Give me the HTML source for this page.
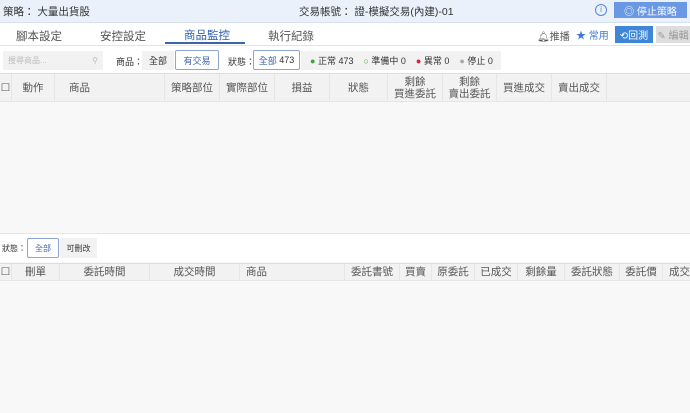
<!DOCTYPE html><html><head><meta charset="utf-8"><style>
*{box-sizing:border-box;margin:0;padding:0}
body{width:690px;height:413px;overflow:hidden;background:#f8f8f8;font-family:"Liberation Sans","Noto Sans CJK TC",sans-serif;font-size:10px;color:#333;position:relative}
.a{position:absolute;white-space:nowrap}
.top{left:0;top:0;width:690px;height:23px;background:#eaf1fb;border-bottom:1px solid #d6e0ef}
.tabs{left:0;top:23px;width:690px;height:23px;background:#fff;border-bottom:1px solid #e3e3e3}
.filter{left:0;top:46px;width:690px;height:27px;background:#fff}
.hdr{background:#f2f2f2;border-top:1px solid #ddd;border-bottom:1px solid #e6e6e6;color:#555;font-size:10.5px}
.c{position:absolute;top:0;height:100%;display:flex;align-items:center;justify-content:center;text-align:center;border-right:1px solid #e6e6e6;line-height:12px}
.btn{position:absolute;height:19px;display:flex;align-items:center;justify-content:center;font-size:9px}
</style></head><body>
<div class="a top"></div>
<div class="a" style="left:3px;top:4px;font-size:10.5px">策略： 大量出貨股</div>
<div class="a" style="left:299px;top:4px;font-size:10.5px">交易帳號： 證-模擬交易(內建)-01</div>
<div class="a" style="left:595px;top:4px;width:12px;height:12px;border:1px solid #5a86d6;border-radius:50%;color:#5a86d6;font-size:8px;text-align:center;line-height:10px">i</div>
<div class="a" style="left:614px;top:2px;width:73px;height:16px;background:#6a98e4;color:#fff;font-size:10px;display:flex;align-items:center;justify-content:center">◎ 停止策略</div>
<div class="a tabs"></div>
<div class="a" style="left:16px;top:28px;font-size:11.5px;color:#555">腳本設定</div>
<div class="a" style="left:100px;top:28px;font-size:11.5px;color:#555">安控設定</div>
<div class="a" style="left:184px;top:27px;font-size:11.5px;color:#2e5fb0">商品監控</div>
<div class="a" style="left:165px;top:42px;width:80px;height:2px;background:#3e64a8"></div>
<div class="a" style="left:268px;top:28px;font-size:11.5px;color:#555">執行紀錄</div>
<div class="a" style="left:537px;top:28px;color:#555">🔔︎推播</div>
<div class="a" style="left:576px;top:27px;color:#3d7ad8">★ 常用</div>
<div class="a" style="left:615px;top:26px;width:38px;height:17px;background:#3d86d8;color:#fff;display:flex;align-items:center;justify-content:center">⟲回測</div>
<div class="a" style="left:656px;top:26px;width:34px;height:17px;background:#ddd;color:#999;display:flex;align-items:center;justify-content:center">✎ 編輯</div>
<div class="a filter"></div>
<div class="btn" style="left:3px;top:51px;width:100px;background:#f2f2f2;justify-content:space-between;padding:0 5px;color:#bbb;font-size:8px"><span>搜尋商品...</span><span>⚲</span></div>
<div class="a" style="left:116px;top:55px;font-size:9px">商品：</div>
<div class="btn" style="left:142px;top:51px;width:32px;background:#f2f2f2">全部</div>
<div class="btn" style="left:175px;top:50px;width:44px;height:20px;border:1px solid #8aa6d0;border-radius:2px;color:#3e64a8;background:#fff">有交易</div>
<div class="a" style="left:228px;top:55px;font-size:9px">狀態：</div>
<div class="btn" style="left:253px;top:50px;width:47px;height:20px;border:1px solid #8aa6d0;border-radius:2px;background:#fff"><span style="color:#3e64a8">全部&nbsp;</span>473</div>
<div class="btn" style="left:301px;top:51px;width:200px;background:#f2f2f2;justify-content:flex-start;padding-left:9px"><span style="color:#3a3">●</span>&nbsp;正常 473&nbsp;&nbsp;&nbsp;&nbsp;<span style="color:#3a3">○</span>&nbsp;準備中 0&nbsp;&nbsp;&nbsp;&nbsp;<span style="color:#d23">●</span>&nbsp;異常 0&nbsp;&nbsp;&nbsp;&nbsp;<span style="color:#aaa">●</span>&nbsp;停止 0</div>
<div class="a hdr" style="left:0;top:73px;width:690px;height:29px">
<div class="c" style="left:0;width:12px">☐</div><div class="c" style="left:12px;width:43px">動作</div><div class="c" style="left:55px;width:110px;justify-content:flex-start;padding-left:14px">商品</div><div class="c" style="left:165px;width:55px">策略部位</div><div class="c" style="left:220px;width:55px">實際部位</div><div class="c" style="left:275px;width:55px">損益</div><div class="c" style="left:330px;width:58px">狀態</div><div class="c" style="left:388px;width:55px">剩餘<br>買進委託</div><div class="c" style="left:443px;width:54px">剩餘<br>賣出委託</div><div class="c" style="left:497px;width:55px">買進成交</div><div class="c" style="left:552px;width:55px">賣出成交</div></div>
<div class="a" style="left:0;top:233px;width:690px;height:29px;background:#fff;border-top:1px solid #e6e6e6"></div>
<div class="a" style="left:2px;top:243px;font-size:8px">狀態：</div>
<div class="btn" style="left:27px;top:238px;width:32px;height:20px;border:1px solid #8aa6d0;border-radius:2px;color:#3e64a8;background:#fff;font-size:8px">全部</div>
<div class="btn" style="left:60px;top:238px;width:37px;height:20px;background:#f2f2f2;font-size:8px">可刪改</div>
<div class="a hdr" style="left:0;top:263px;width:690px;height:18px">
<div class="c" style="left:0;width:12px">☐</div><div class="c" style="left:12px;width:48px">刪單</div><div class="c" style="left:60px;width:90px">委託時間</div><div class="c" style="left:150px;width:90px">成交時間</div><div class="c" style="left:240px;width:105px;justify-content:flex-start;padding-left:6px">商品</div><div class="c" style="left:345px;width:55px">委託書號</div><div class="c" style="left:400px;width:32px">買賣</div><div class="c" style="left:432px;width:43px">原委託</div><div class="c" style="left:475px;width:43px">已成交</div><div class="c" style="left:518px;width:47px">剩餘量</div><div class="c" style="left:565px;width:55px">委託狀態</div><div class="c" style="left:620px;width:43px">委託價</div><div class="c" style="left:663px;width:40px;justify-content:flex-start;padding-left:6px">成交</div></div>
</body></html>
